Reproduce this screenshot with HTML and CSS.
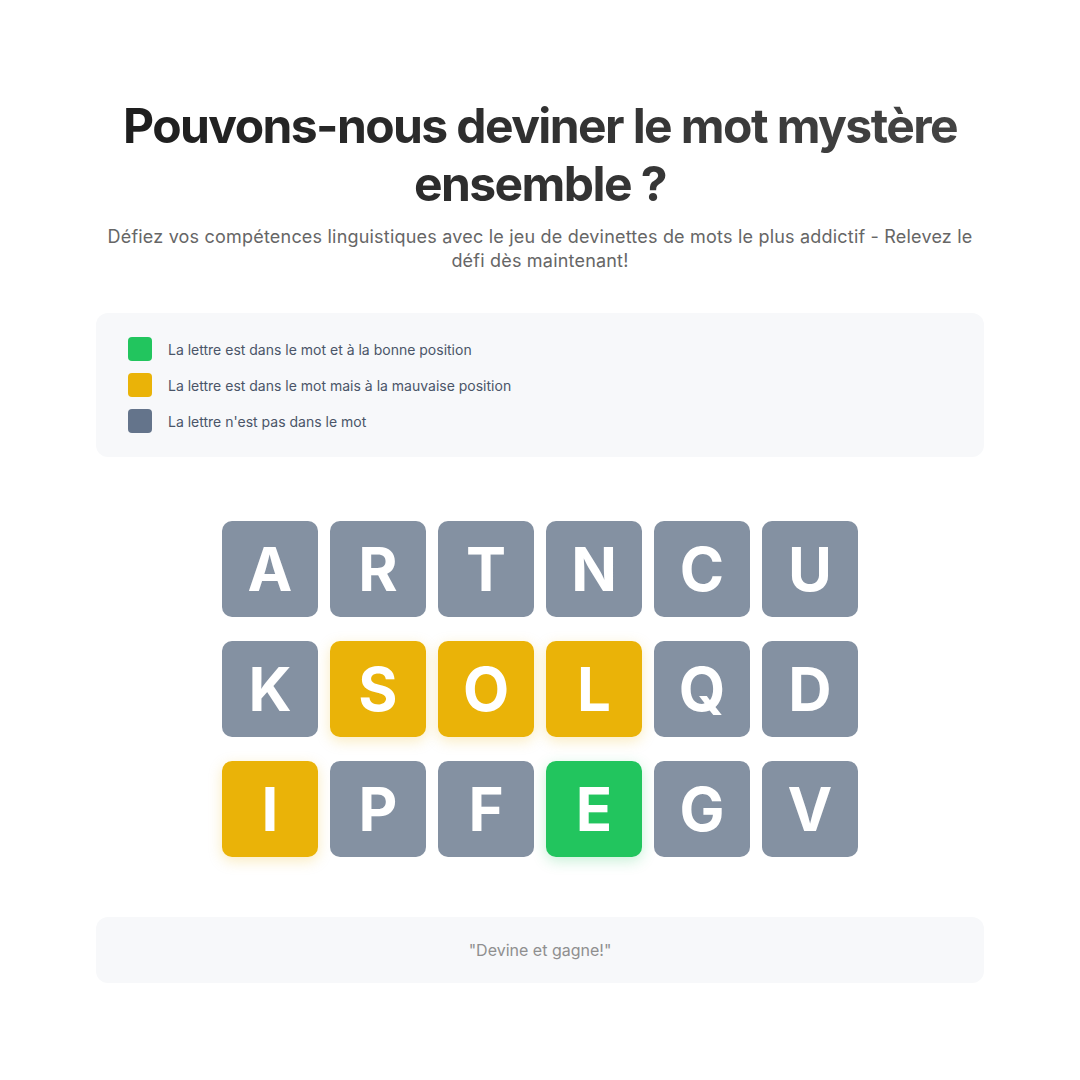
FILE: index.html
```html
<!DOCTYPE html>
<html lang="fr">
<head>
<meta charset="utf-8">
<title>Mot mystère</title>
<link rel="stylesheet" href="styles.css">
</head>
<body>
<main class="page">
  <header class="hero">
    <h1 class="title">Pouvons-nous deviner le mot mystère ensemble ?</h1>
    <p class="subtitle">Défiez vos compétences linguistiques avec le jeu de devinettes de mots le plus addictif - Relevez le défi dès maintenant!</p>
  </header>

  <section class="legend">
    <div class="legend-row"><span class="swatch swatch-correct"></span><span class="legend-text">La lettre est dans le mot et à la bonne position</span></div>
    <div class="legend-row"><span class="swatch swatch-present"></span><span class="legend-text">La lettre est dans le mot mais à la mauvaise position</span></div>
    <div class="legend-row"><span class="swatch swatch-absent"></span><span class="legend-text">La lettre n'est pas dans le mot</span></div>
  </section>

  <section class="board">
    <div class="tile absent">A</div>
    <div class="tile absent">R</div>
    <div class="tile absent">T</div>
    <div class="tile absent">N</div>
    <div class="tile absent">C</div>
    <div class="tile absent">U</div>
    <div class="tile absent">K</div>
    <div class="tile present">S</div>
    <div class="tile present">O</div>
    <div class="tile present">L</div>
    <div class="tile absent">Q</div>
    <div class="tile absent">D</div>
    <div class="tile present">I</div>
    <div class="tile absent">P</div>
    <div class="tile absent">F</div>
    <div class="tile correct">E</div>
    <div class="tile absent">G</div>
    <div class="tile absent">V</div>
  </section>

  <footer class="footer">"Devine et gagne!"</footer>
</main>
</body>
</html>
```

FILE: styles.css
```css
* { box-sizing: border-box; }

html, body {
  margin: 0;
  padding: 0;
  background: #ffffff;
}

body {
  font-family: Inter, "Noto Sans", "Liberation Sans", sans-serif;
}

.page {
  width: 888px;
  margin: 0 auto;
  padding-top: 97px;
  display: flex;
  flex-direction: column;
}

.hero {
  text-align: center;
}

.title {
  margin: 0;
  font-size: 48px;
  line-height: 57.6px;
  font-weight: 700;
  letter-spacing: -1.6px;
  background: linear-gradient(90deg, #1c1c1c 0%, #333333 55%, #454545 100%);
  -webkit-background-clip: text;
  background-clip: text;
  color: transparent;
}

.subtitle {
  margin: 13px 0 0;
  font-size: 18px;
  line-height: 24px;
  letter-spacing: 0.2px;
  color: #666666;
}

.legend {
  margin-top: 40px;
  background: #f7f8fa;
  border-radius: 12px;
  padding: 24px 32px;
  display: flex;
  flex-direction: column;
  gap: 12px;
}

.legend-row {
  display: flex;
  align-items: center;
  gap: 16px;
  height: 24px;
}

.swatch {
  width: 24px;
  height: 24px;
  border-radius: 4px;
  flex: none;
}

.swatch-correct { background: #22c55e; }
.swatch-present { background: #eab308; }
.swatch-absent { background: #64748b; }

.legend-text {
  font-size: 14px;
  color: #4a5568;
}

.board {
  margin: 64px auto 0;
  display: grid;
  grid-template-columns: repeat(6, 96px);
  grid-auto-rows: 96px;
  column-gap: 12px;
  row-gap: 24px;
}

.tile {
  display: flex;
  align-items: center;
  justify-content: center;
  border-radius: 10px;
  color: #ffffff;
  font-size: 60px;
  font-weight: 700;
}

.tile.absent { background: #8491a2; }
.tile.present {
  background: #eab308;
  box-shadow: 0 4px 14px rgba(234, 179, 8, 0.25);
}
.tile.correct {
  background: #22c55e;
  box-shadow: 0 4px 14px rgba(34, 197, 94, 0.25);
}

.footer {
  margin-top: 60px;
  background: #f7f8fa;
  border-radius: 12px;
  padding: 22px 24px;
  line-height: 22px;
  text-align: center;
  font-size: 16px;
  color: #8f8f8f;
}
```
